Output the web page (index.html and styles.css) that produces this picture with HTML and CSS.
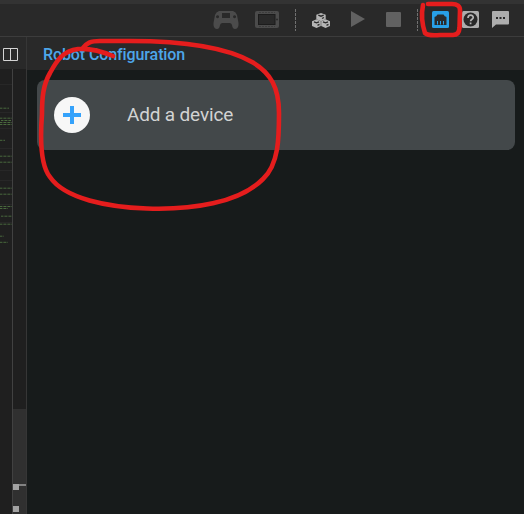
FILE: index.html
```
<!DOCTYPE html>
<html lang="en">
<head>
<meta charset="utf-8">
<title>Robot Configuration</title>
<link rel="stylesheet" href="styles.css">
</head>
<body>
<div class="app">
  <header class="toolbar">
    <svg class="icon pad" width="26" height="18" viewBox="0 0 26 18"><path fill="#4b4b4b" fill-rule="evenodd" d="M6 0h14q3 1 4 4l1.500 8v2q-.5 4-3.500 4-2.500 0-3-4-.5-2-2.500-2h-7Q7.500 12 7 14q-.5 4-3 4-3 0-3.500-4v-2L2 4Q3 1 6 0ZM9 2v5h8V2ZM4.500 4.200a1.500 1.500 0 1 0 .1 0ZM21.500 4.200a1.500 1.500 0 1 0 .1 0Z"/></svg>
    <svg class="icon tablet" width="24" height="17" viewBox="0 0 24 17"><rect width="24" height="17" rx="2" fill="#4b4b4b"/><rect x="3.500" y="3.500" width="16.500" height="10" fill="#292929" stroke="#1c1c1c"/><path d="M4 1.500h16M4 15.500h16" stroke="#393939" stroke-width=".8" stroke-dasharray="2 1"/><circle cx="22" cy="8.500" r="1" fill="#292929"/></svg>
    <i class="divider"></i>
    <svg class="icon cubes" width="18" height="15" viewBox="0 0 18 15"><g fill="#b5b5b5"><path d="m9 0 4.700 1.700v4.500L9 8.200 4.300 6.200V1.700Z"/><path d="m4.500 6.300 4.300 1.900V13l-4.300 2L0 13V8.200Z"/><path d="m13.500 6.300L18 8.200V13l-4.500 2-4.300-2V8.200Z"/></g><path d="m6.300 2.200 2.700 1 2.700-1M10 5.500l2-1M2 8.800l2.500 1L7 8.800M5.500 12.300l2-1M11 8.800l2.500 1 2.500-1M14.500 12.300l2-1" fill="none" stroke="#292929" stroke-width="1.300"/></svg>
    <svg class="icon play" width="14" height="16" viewBox="0 0 14 16"><path d="M0 0v16l14-8Z" fill="#616161"/></svg>
    <span class="stop"></span>
    <i class="divider second"></i>
    <svg class="icon port" width="17" height="17" viewBox="0 0 17 17"><rect width="17" height="17" rx="1.500" fill="#28a0e8"/><path d="M2.500 14V6.500q0-1 1-1H4l1.500-2h6l1.500 2h.5q1 0 1 1V14Z" fill="#292b2d"/><path d="M5.500 10v3.500M8.500 10v3.500M11.500 10v3.500" stroke="#28a0e8" stroke-width="1"/></svg>
    <svg class="icon help" width="17" height="17" viewBox="0 0 17 17"><rect width="17" height="17" rx="1.500" fill="#adadad"/><circle cx="8.500" cy="8.500" r="7" fill="#292929"/><path d="M6 7q0-2.800 2.600-2.800T11.200 6.600C11.200 8.300 8.600 8.200 8.600 10.300M8.600 11.600v1.700" fill="none" stroke="#b5b5b5" stroke-width="1.700"/></svg>
    <svg class="icon chat" width="17" height="17" viewBox="0 0 17 17"><path d="M1 0h15q1 0 1 1v11.500q0 1-1 1H4L0 17V1q0-1 1-1Z" fill="#adadad"/><path d="M4 6h2v2H4Zm3.500 0h2v2h-2ZM11 6h2v2h-2Z" fill="#292929"/></svg>
  </header>
  <main class="workspace">
    <aside class="editor">
      <div class="tabs"><svg width="15" height="13" viewBox="0 0 15 13"><path d="M.5.5h14v12H.5ZM7.500.5v12" fill="none" stroke="#d4d4d4"/></svg></div>
      <div class="gutters">
        <svg class="minimap" width="12" height="445" viewBox="0 69 12 445">
          <path d="M0 84.500h12M0 112.500h12M0 128.500h12M0 148.500h12M0 170.500h12M0 180.500h12M0 204.500h12M0 222.500h12" stroke="#272727"/>
          <g stroke="#49693d" stroke-dasharray="2 .6 1 .4" fill="none"><path d="M0 108.200h9M0 118.200h12M1 120.500h10M0 122.500h12M0 124.500h12M0 156.200h12M0 162.200h12M0 188.200h12M0 194.200h12M0 206.500h12M0 208.500h8M1 216.200h11M0 224.200h12"/><path d="M0 140.300h5M0 236.200h4M0 242.300h8"/></g>
        </svg>
        <div class="scroll"><div class="thumb"><i class="mark upper"></i><i class="mark"></i></div></div>
      </div>
    </aside>
    <section class="panel">
      <h1 class="title">Robot Configuration</h1>
      <div class="content">
        <div class="device"><span class="add"><svg width="18" height="18" viewBox="0 0 18 18"><path d="M9 0v18M0 9h18" stroke="#35a2fb" stroke-width="4"/></svg></span><span class="label">Add a device</span></div>
      </div>
    </section>
  </main>
  <svg class="annotation" width="524" height="514" viewBox="0 0 524 514"><path d="M113 56C101 51 90 48 78 49C63 51 57 60 50 73C43 85 42 98 42 114C40 140 41 166 50 177C65 199 108 207 147 208.500C192 210 239 203 263 179C279 164 279 137 279 113C279 88 271 73 252 62C224 46 180 41 130 41H100C90 41 87 43 83 48"/><path d="M423 5C421 15 422 24 425 33Q428 36 440 35H453Q459 35 459.500 28L460 10Q460 4 452 4H428"/></svg>
</div>
</body>
</html>
```
FILE: styles.css
```
* { box-sizing: border-box; }
body { margin: 0; background: #171b1b; font-family: Roboto, sans-serif; }
svg { display: block; }
.app { position: relative; width: 524px; height: 514px; overflow: hidden; display: flex; flex-direction: column; }
.toolbar { height: 37px; flex: none; display: flex; align-items: flex-start; padding: 7px 0 0 213px; background: #292929; border-top: 4px solid #333; border-bottom: 1px solid #3c3c3c; }
.icon { flex: none; }
.tablet { margin-left: 16px; }
.divider { flex: none; width: 1px; height: 22px; margin: -2px 0 0 16px; background: repeating-linear-gradient(#707070 0 3px, transparent 3px 4px); }
.cubes { margin: 2px 0 0 16px; }
.play { margin-left: 21px; }
.stop { flex: none; width: 15px; height: 15px; margin: 1px 0 0 21px; border-radius: 1px; background: #616161; }
.second { margin-left: 16px; }
.port { margin-left: 14px; }
.help, .chat { margin-left: 13px; }
.workspace { flex: 1; min-height: 0; display: flex; }
.editor { width: 27px; flex: none; display: flex; flex-direction: column; border-right: 1px solid #363636; background: #1f1f1f; }
.tabs { height: 32px; flex: none; padding: 11px 0 0 3px; background: #292929; }
.gutters { flex: 1; display: flex; }
.scroll { flex: 1; display: flex; flex-direction: column; justify-content: flex-end; border-left: 1px solid #414141; }
.thumb { height: 105px; padding-top: 75px; background: #303030; }
.mark { display: block; width: 6px; height: 6px; background: #a3a3a3; }
.upper { margin-bottom: 16px; }
.upper::before { content: ""; display: block; width: 13px; height: 2px; background: linear-gradient(90deg, #a3a3a3 6px, #828282 6px); }
.panel { flex: 1; display: flex; flex-direction: column; }
.title { height: 33px; margin: 0; padding-left: 16px; background: #292929; color: #4da6ea; font-size: 16px; font-weight: 500; line-height: 35px; letter-spacing: -.1px; }
.content { flex: 1; padding: 10px 9px 0 10px; }
.device { height: 70px; display: flex; align-items: center; padding-left: 17px; border-radius: 8px; background: #43484a; }
.add { width: 36px; height: 36px; display: grid; place-items: center; border-radius: 50%; background: #f7f7f7; }
.label { margin-left: 37px; color: #d2d3d3; font-size: 19px; line-height: 24px; letter-spacing: -.17px; }
.annotation { position: absolute; inset: 0; fill: none; stroke: #e51d1d; stroke-width: 4.600; stroke-linecap: round; stroke-linejoin: round; }
```
